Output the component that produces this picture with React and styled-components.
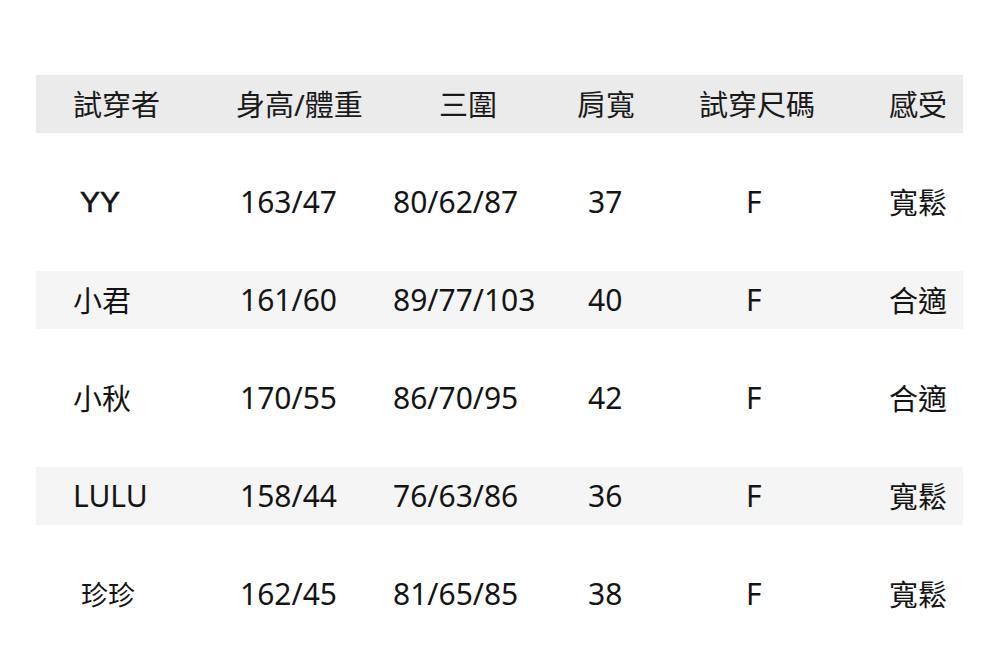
import React from 'react'
import styled, { createGlobalStyle } from 'styled-components'

const GlobalStyle = createGlobalStyle`
  html, body {
    margin: 0;
    padding: 0;
    background: #ffffff;
  }
  body {
    font-family: "Noto Sans", "Noto Sans CJK TC", sans-serif;
    color: #141414;
  }
`

// column widths and the left padding of header / body text in each one
const columns = [
  { width: 190, head: 37, body: 37 },
  { width: 154, head: 10, body: 14 },
  { width: 180, head: 59, body: 13 },
  { width: 120, head: 17, body: 28 },
  { width: 150, head: 19, body: 66 },
  { width: 133, head: 59, body: 59 }
]

const headers = ['試穿者', '身高/體重', '三圍', '肩寬', '試穿尺碼', '感受']

const rows = [
  { name: 'YY', indent: 7, latin: true, cells: ['163/47', '80/62/87', '37', 'F', '寬鬆'] },
  { name: '小君', cells: ['161/60', '89/77/103', '40', 'F', '合適'] },
  { name: '小秋', cells: ['170/55', '86/70/95', '42', 'F', '合適'] },
  { name: 'LULU', cells: ['158/44', '76/63/86', '36', 'F', '寬鬆'] },
  { name: '珍珍', indent: 8, small: true, cells: ['162/45', '81/65/85', '38', 'F', '寬鬆'] }
]

const Page = styled.div`
  padding: 75px 0 0 36px;
`

const Table = styled.div`
  width: 927px;
  display: flex;
  flex-direction: column;
  gap: 40px;
`

const Row = styled.div`
  display: grid;
  grid-template-columns: ${columns.map(c => c.width + 'px').join(' ')};
  height: 58px;
  align-items: center;
  background: ${p => p.$head ? '#ebebeb' : p.$striped ? '#f5f5f5' : 'transparent'};
`

const Cell = styled.div`
  padding-left: ${p => p.$pad}px;
  font-size: ${p => p.$small ? 27 : p.$cjk ? 29 : 30}px;
  line-height: 1;
  white-space: nowrap;
  font-family: ${p => p.$latin
    ? '"Liberation Sans", Arial, sans-serif'
    : '"Noto Sans", "Noto Sans CJK TC", sans-serif'};
  -webkit-text-stroke: ${p => p.$latin ? '0.6px #141414' : '0'};
`

const HeadCell = styled(Cell)`
  font-size: 29px;
  color: #1a1a1a;
`

const isCjk = text => /[\u4e00-\u9fff]/.test(text)

export default function App() {
  return (
    <>
      <GlobalStyle />
      <Page>
        <Table>
          <Row $head>
            {headers.map((h, i) => (
              <HeadCell key={h} $pad={columns[i].head} $cjk>{h}</HeadCell>
            ))}
          </Row>

          {rows.map((row, r) => (
            <Row key={row.name} $striped={r % 2 === 1}>
              <Cell
                $pad={columns[0].body + (row.indent || 0)}
                $cjk={isCjk(row.name)}
                $latin={row.latin}
                $small={row.small}
              >
                {row.name}
              </Cell>
              {row.cells.map((value, i) => (
                <Cell key={i} $pad={columns[i + 1].body} $cjk={isCjk(value)}>
                  {value}
                </Cell>
              ))}
            </Row>
          ))}
        </Table>
      </Page>
    </>
  )
}
